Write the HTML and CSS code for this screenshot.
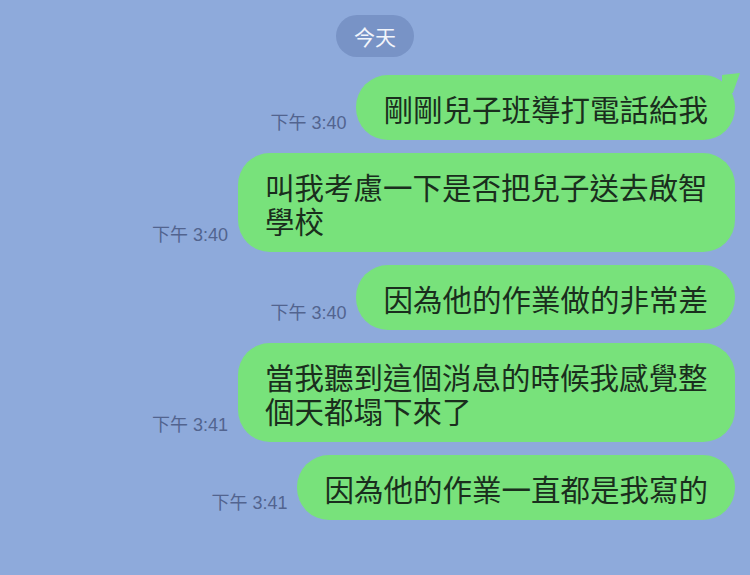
FILE: index.html
```html
<!doctype html>
<html lang="zh-Hant">
 <head>
  <meta charset="UTF-8">
  <meta name="viewport" content="width=device-width, initial-scale=1.0">
  <title>聊天</title>
  <link rel="stylesheet" href="styles.css">
 </head>
 <body>
  <div class="chat">
   <div class="date"><span class="date-pill">今天</span></div>

   <div class="row">
    <span class="time">下午 3:40</span>
    <div class="bubble first">剛剛兒子班導打電話給我</div>
   </div>

   <div class="row">
    <span class="time">下午 3:40</span>
    <div class="bubble">叫我考慮一下是否把兒子送去啟智學校</div>
   </div>

   <div class="row">
    <span class="time">下午 3:40</span>
    <div class="bubble">因為他的作業做的非常差</div>
   </div>

   <div class="row">
    <span class="time">下午 3:41</span>
    <div class="bubble">當我聽到這個消息的時候我感覺整個天都塌下來了</div>
   </div>

   <div class="row">
    <span class="time">下午 3:41</span>
    <div class="bubble">因為他的作業一直都是我寫的</div>
   </div>
  </div>
 </body>
</html>
```

FILE: styles.css
```css
body {
  margin: 0;
  height: 575px;
  background-color: #8eaadb;
  font-family: "Noto Sans CJK TC", "Noto Sans", sans-serif;
  overflow: hidden;
}
.chat {
  display: flex;
  flex-direction: column;
  gap: 13px;
  padding: 15px 15px 0 15px;
}
.date {
  display: flex;
  justify-content: center;
  margin-bottom: 5px;
}
.date-pill {
  background-color: #7893c6;
  color: #f2f5fb;
  font-size: 21px;
  line-height: 42px;
  padding: 0 18px;
  border-radius: 21px;
}
.row {
  display: flex;
  justify-content: flex-end;
  align-items: flex-end;
  gap: 10px;
}
.time {
  color: #52648f;
  font-family: "Liberation Sans", "Noto Sans CJK TC", sans-serif;
  font-size: 18px;
  line-height: 20px;
  padding-bottom: 7px;
  white-space: nowrap;
}
.bubble {
  position: relative;
  background-color: #78e27b;
  color: #1a2e1d;
  font-size: 29.5px;
  line-height: 34px;
  padding: 15.5px 27px;
  border-radius: 32px;
  max-width: 443px;
}
.bubble.first::after {
  content: "";
  position: absolute;
  top: -2px;
  right: -5px;
  width: 18px;
  height: 20px;
  background-color: #78e27b;
  clip-path: polygon(0 10%, 100% 0, 60% 100%, 0 100%);
}
```
